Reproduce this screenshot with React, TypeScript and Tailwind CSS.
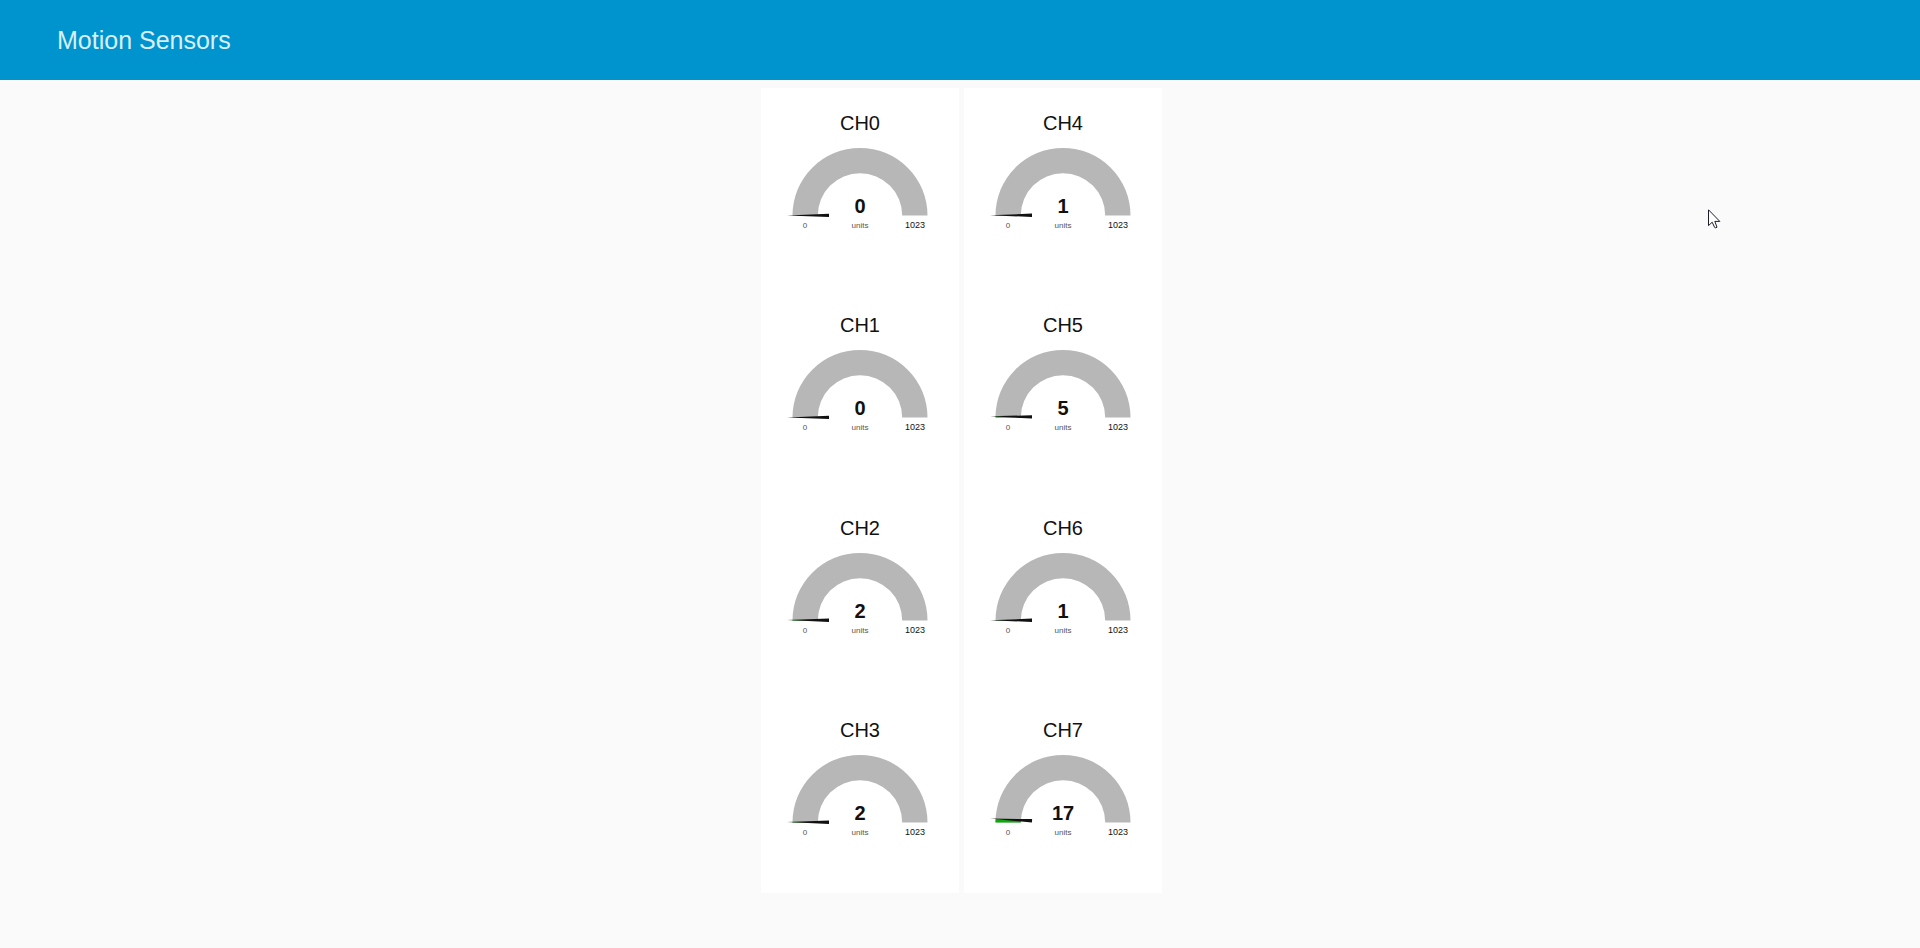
const MAX = 1023;
const COLUMNS = [
  [
    { label: 'CH0', value: 0 },
    { label: 'CH1', value: 0 },
    { label: 'CH2', value: 2 },
    { label: 'CH3', value: 2 },
  ],
  [
    { label: 'CH4', value: 1 },
    { label: 'CH5', value: 5 },
    { label: 'CH6', value: 1 },
    { label: 'CH7', value: 17 },
  ],
];

const CX = 99;
const CY = 127.4;
const OUTER = 67.5;
const INNER = 42.2;

// Point on the dial: angle 0 is the left end, growing clockwise.
function point(radius: number, angle: number) {
  return `${CX - radius * Math.cos(angle)} ${CY - radius * Math.sin(angle)}`;
}

function band(angle: number) {
  return `M${point(OUTER, 0)} A${OUTER} ${OUTER} 0 0 1 ${point(OUTER, angle)} L${point(INNER, angle)} A${INNER} ${INNER} 0 0 0 ${point(INNER, 0)} Z`;
}

function Gauge({ label, value }: { label: string; value: number }) {
  const angle = (value / MAX) * Math.PI;
  return (
    <svg viewBox="0 0 198 198" className="block w-full" role="img" aria-label={`${label}: ${value} units`}>
      <text x={CX} y="42" textAnchor="middle" className="fill-[#111111] text-[20px]">{label}</text>
      <path d={band(Math.PI)} fill="#b7b7b7" />
      {value > 0 && <path d={band(angle)} fill="#0ca80c" />}
      <path
        d={`M26 ${CY} L68 ${CY - 1.7} V${CY + 1.7} Z`}
        fill="#111111"
        transform={`rotate(${(angle * 180) / Math.PI} ${CX} ${CY})`}
      />
      <text x={CX} y="125" textAnchor="middle" className="fill-[#111111] text-[20px] font-bold">{value}</text>
      <text x="44" y="140" textAnchor="middle" className="fill-[#555555] text-[8px]">0</text>
      <text x={CX} y="140" textAnchor="middle" className="fill-[#555555] text-[8px]">units</text>
      <text x="154" y="140" textAnchor="middle" className="fill-[#111111] text-[9px]">{MAX}</text>
    </svg>
  );
}

export default function App() {
  return (
    <div className="min-h-screen bg-[#fafafa] font-['Liberation_Sans',Arial,sans-serif]">
      <header className="flex h-20 items-center bg-[#0094ce] px-[57px]">
        <h1 className="text-[25px] leading-8 text-[#d9eff8]">Motion Sensors</h1>
      </header>
      <main className="flex justify-center gap-[5px] pt-2 pl-[3px]">
        {COLUMNS.map((gauges, i) => (
          <section key={i} className="flex min-h-[805px] w-[198px] flex-col justify-between bg-white">
            {gauges.map((gauge) => (
              <Gauge key={gauge.label} {...gauge} />
            ))}
          </section>
        ))}
      </main>
      <svg aria-hidden="true" viewBox="0 0 13 20" className="pointer-events-none absolute top-[209px] left-[1708px] h-5 w-[13px]">
        <path
          d="M.5 .8 V16.6 L4.2 13.2 L6.6 18.4 Q7.5 19.3 9 18.2 L6.8 12.4 H11.8 Z"
          fill="white"
          stroke="#1c1c2a"
          strokeWidth="1"
        />
      </svg>
    </div>
  );
}
